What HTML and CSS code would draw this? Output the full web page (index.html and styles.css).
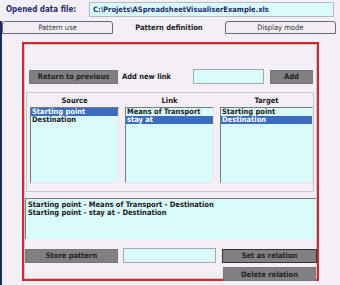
FILE: index.html
```html
<!DOCTYPE html>
<html lang="en">
<head>
    <meta charset="UTF-8">
    <title>Pattern definition</title>
    <link rel="stylesheet" href="styles.css">
</head>
<body>
    <div class="file-row">
        <span class="file-label">Opened data file:</span>
        <div class="file-box">C:\Projets\ASpreadsheetVisualiserExample.xls</div>
    </div>

    <div class="section">
        <div class="tabs">
            <div class="tab">Pattern use</div>
            <div class="tab active">Pattern definition</div>
            <div class="tab">Display mode</div>
        </div>

        <div class="main">
            <div class="frame">
                <!-- add link row -->
                <div class="link-row">
                    <button class="btn btn-return">Return to previous</button>
                    <span class="link-label">Add new link</span>
                    <div class="field field-link"></div>
                    <button class="btn btn-add">Add</button>
                </div>

                <!-- source / link / target lists -->
                <div class="lists">
                    <div class="col">
                        <div class="col-title">Source</div>
                        <div class="list">
                            <div class="item selected">Starting point</div>
                            <div class="item">Destination</div>
                        </div>
                    </div>
                    <div class="col">
                        <div class="col-title">Link</div>
                        <div class="list">
                            <div class="item">Means of Transport</div>
                            <div class="item selected">stay at</div>
                        </div>
                    </div>
                    <div class="col">
                        <div class="col-title">Target</div>
                        <div class="list">
                            <div class="item">Starting point</div>
                            <div class="item selected">Destination</div>
                        </div>
                    </div>
                </div>

                <div class="patterns">
                    <div>Starting point - Means of Transport - Destination</div>
                    <div>Starting point - stay at - Destination</div>
                </div>

                <div class="store-row">
                    <button class="btn btn-store">Store pattern</button>
                    <div class="field field-store"></div>
                    <button class="btn btn-relation">Set as relation</button>
                </div>
                <div class="delete-row">
                    <button class="btn btn-delete">Delete relation</button>
                </div>
            </div>
        </div>
    </div>
</body>
</html>
```

FILE: styles.css
```css
body {
    margin: 0;
    background: #f4eff6;
    font-family: "DejaVu Sans Condensed", "DejaVu Sans", sans-serif;
    font-size: 7.5px;
    font-weight: bold;
    color: #1a1a1a;
    width: 340px;
    height: 285px;
    overflow: hidden;
}
.file-row {
    display: flex;
    align-items: center;
    height: 15px;
    padding: 2px 6px 0 6px;
}
.file-label {
    width: 83px;
    color: #1f2b70;
    font-size: 8px;
}
.file-box {
    flex: 1;
    height: 13px;
    line-height: 13px;
    background: #d9fbfb;
    border: 1px solid #b8b8c0;
    padding-left: 3px;
    color: #1f2b70;
}
.section {
    margin-top: 4px;
    border-left: 2px solid #1c2a66;
}
.tabs {
    display: flex;
    width: 334px;
    height: 13px;
}
.tab {
    flex: 1;
    text-align: center;
    font-weight: normal;
    line-height: 12px;
    border: 1px solid #6a6a78;
    border-radius: 3px 3px 0 0;
    background: #f1edf3;
    color: #333;
}
.tab.active {
    font-weight: bold;
    color: #1a1a1a;
    border-color: transparent;
    background: #f4eff6;
}
.main {
    height: 250px;
    padding: 8px 0 0 20px;
}
.frame {
    width: 293px;
    height: 235px;
    border: 2px solid #d42828;
    box-shadow: inset -1px -1px 0 #c8c4cc, inset 1px 1px 0 #c8c4cc;
}
.btn {
    font-family: inherit;
    font-size: inherit;
    font-weight: bold;
    color: #222;
    background: #808080;
    border: 1px solid #777;
    padding: 0;
    height: 14px;
}
.link-row {
    display: flex;
    align-items: center;
    margin: 25px 0 0 5px;
}
.btn-return {
    width: 89px;
}
.link-label {
    margin-left: 4px;
    width: 71px;
}
.field {
    height: 13px;
    background: #d9fbfb;
    border: 1px solid #a8a8a8;
}
.field-link {
    width: 69px;
}
.btn-add {
    width: 43px;
    margin-left: 6px;
}
.lists {
    display: grid;
    grid-template-columns: 89px 89px 93px;
    gap: 6px;
    margin: 8px 3px 0 2px;
    padding: 4px 4px 6px 3px;
    border: 1px solid #c8c4cc;
    height: 88px;
}
.col-title {
    text-align: center;
    height: 8px;
    line-height: 8px;
    margin-bottom: 2px;
}
.list {
    height: 74px;
    background: #d9fbfb;
    border-top: 1px solid #7a7a7a;
    border-left: 1px solid #7a7a7a;
    border-right: 1px solid #e8e4ea;
    border-bottom: 1px solid #e8e4ea;
}
.item {
    height: 8px;
    line-height: 8px;
    padding-left: 1px;
    white-space: nowrap;
    overflow: hidden;
}
.item.selected {
    background: #3a6cc2;
    color: #fff;
}
.patterns {
    margin: 6px 1px 0 1px;
    height: 38px;
    padding: 2px 0 0 2px;
    background: #d9fbfb;
    border-top: 1px solid #7a7a7a;
    border-left: 1px solid #7a7a7a;
    line-height: 8px;
}
.store-row {
    display: flex;
    align-items: center;
    margin: 9px 0 0 1px;
}
.btn-store {
    width: 93px;
}
.field-store {
    width: 91px;
    margin-left: 5px;
}
.btn-relation {
    width: 95px;
    margin-left: 6px;
    border: 1px solid #333;
}
.delete-row {
    display: flex;
    justify-content: flex-end;
    margin: 4px 1px 0 0;
}
.btn-delete {
    width: 93px;
}
```
